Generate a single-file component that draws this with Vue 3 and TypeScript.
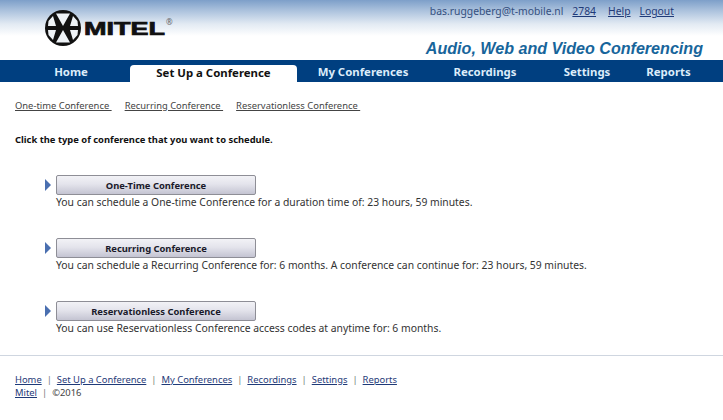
<script setup lang="ts">
const navItems = [
  { label: 'Home', width: 118 },
  { label: 'Set Up a Conference', width: 167, active: true },
  { label: 'My Conferences', width: 132 },
  { label: 'Recordings', width: 112 },
  { label: 'Settings', width: 92 },
  { label: 'Reports', width: 71 }
]
const subLinks = ['One-time Conference', 'Recurring Conference', 'Reservationless Conference']
const options = [
  {
    title: 'One-Time Conference',
    text: 'You can schedule a One-time Conference for a duration time of: 23 hours, 59 minutes.'
  },
  {
    title: 'Recurring Conference',
    text: 'You can schedule a Recurring Conference for: 6 months. A conference can continue for: 23 hours, 59 minutes.'
  },
  {
    title: 'Reservationless Conference',
    text: 'You can use Reservationless Conference access codes at anytime for: 6 months.'
  }
]
const footerLinks = ['Home', 'Set Up a Conference', 'My Conferences', 'Recordings', 'Settings', 'Reports']
</script>

<template>
  <div class="page">
    <header class="header">
      <div class="logo">
        <svg class="mark" viewBox="0 0 36 36" width="36" height="36">
          <circle cx="18" cy="18" r="18" fill="#111" />
          <path d="M11 3.5 L25 3.5 L18 16 Z M11 32.5 L25 32.5 L18 20 Z" fill="#eef2f6" />
          <path d="M3.5 11 L8 6 L11 16 L3 16 Z M3.5 25 L8 30 L11 20 L3 20 Z" fill="#eef2f6" />
          <path d="M32.5 11 L28 6 L25 16 L33 16 Z M32.5 25 L28 30 L25 20 L33 20 Z" fill="#eef2f6" />
        </svg>
        <span class="logo-text">MITEL</span>
        <span class="reg">®</span>
      </div>
      <div class="header-right">
        <div class="user">
          <span class="email">bas.ruggeberg@t-mobile.nl</span>
          <a class="ext">2784</a>
          <a>Help</a>
          <a>Logout</a>
        </div>
        <div class="product">Audio, Web and Video Conferencing</div>
      </div>
    </header>

    <nav class="nav">
      <div
        v-for="item in navItems"
        :key="item.label"
        class="nav-item"
        :class="{ active: item.active }"
        :style="{ width: item.width + 'px' }"
      >
        {{ item.label }}
      </div>
    </nav>

    <main class="main">
      <div class="sublinks">
        <a v-for="link in subLinks" :key="link">{{ link }}&nbsp;</a>
      </div>
      <p class="intro">Click the type of conference that you want to schedule.</p>
      <div class="options">
        <div v-for="option in options" :key="option.title" class="option">
          <div class="option-top">
            <span class="arrow"></span>
            <button class="option-btn" type="button">{{ option.title }}</button>
          </div>
          <p class="option-text">{{ option.text }}</p>
        </div>
      </div>
    </main>

    <footer class="footer">
      <div class="footer-row">
        <template v-for="(link, i) in footerLinks" :key="link">
          <span v-if="i > 0" class="sep">|</span>
          <a>{{ link }}</a>
        </template>
      </div>
      <div class="footer-row">
        <a>Mitel</a>
        <span class="sep">|</span>
        <span class="copy">©2016</span>
      </div>
    </footer>
  </div>
</template>

<style>
html,
body {
  margin: 0;
  background: #fff;
}
</style>

<style scoped>
.page {
  width: 723px;
  height: 420px;
  overflow: hidden;
  font-family: 'Noto Sans', sans-serif;
  font-size: 10.35px;
  color: #222;
}

.header {
  height: 60px;
  display: flex;
  justify-content: space-between;
  background: linear-gradient(#7d9fc9 0, #a9c0dc 10px, #e2eaf3 24px, #fff 36px);
}

.logo {
  display: flex;
  align-items: flex-start;
  padding: 10px 0 0 45px;
}

.mark {
  flex: none;
}

.logo-text {
  display: inline-block;
  width: 82px;
  margin: 10px 0 0 3px;
  font-family: 'Liberation Sans', sans-serif;
  font-size: 18px;
  font-weight: 700;
  line-height: 18px;
  color: #111;
  -webkit-text-stroke: 0.7px #111;
  transform: scaleX(1.5);
  transform-origin: left center;
}

.reg {
  margin: 8px 0 0 0;
  font-size: 8px;
  line-height: 8px;
  color: #666;
}

.header-right {
  display: flex;
  flex-direction: column;
  align-items: flex-end;
  padding-right: 20px;
}

.user {
  display: flex;
  gap: 9px;
  padding: 4px 29px 0 0;
  line-height: 15px;
  color: #35507f;
}

.user a {
  color: #1f3a78;
  text-decoration: underline;
}

.ext {
  margin-right: 3px;
}

.product {
  margin-top: 19px;
  font-family: 'Liberation Sans', sans-serif;
  font-size: 16.1px;
  font-style: italic;
  font-weight: 700;
  line-height: 20px;
  color: #17659b;
}

.nav {
  height: 22px;
  display: flex;
  padding-left: 12px;
  background: #003f80;
}

.nav-item {
  padding-top: 4px;
  box-sizing: border-box;
  text-align: center;
  font-size: 11.4px;
  font-weight: 700;
  line-height: 16px;
  color: #dcecfa;
}

.nav-item.active {
  margin-top: 5px;
  padding-top: 0;
  height: 17px;
  border-radius: 4px 4px 0 0;
  background: #fff;
  color: #111;
}

.main {
  padding: 0 15px;
}

.sublinks {
  display: flex;
  gap: 13px;
  padding-top: 16px;
  font-size: 9.4px;
  line-height: 15px;
}

.sublinks a {
  color: #444;
  text-decoration: underline;
}

.intro {
  margin: 19px 0 0;
  font-size: 9.4px;
  font-weight: 700;
  line-height: 15px;
  color: #111;
}

.options {
  display: flex;
  flex-direction: column;
  gap: 28px;
  padding: 28px 0 0 30px;
}

.option-top {
  display: flex;
  align-items: center;
  gap: 5px;
}

.arrow {
  width: 0;
  height: 0;
  border-style: solid;
  border-width: 6px 0 6px 6px;
  border-color: transparent transparent transparent #4a6fb0;
}

.option-btn {
  width: 200px;
  height: 20px;
  padding: 0;
  border: 1px solid #8e8e96;
  border-radius: 2px;
  background: linear-gradient(#f2f2f6, #e4e4ec 45%, #c4c4d2);
  font-family: inherit;
  font-size: 9.4px;
  font-weight: 700;
  color: #1a1a2a;
}

.option-text {
  margin: 0 0 0 11px;
  line-height: 15px;
  color: #333;
}

.footer {
  margin-top: 19px;
  padding: 17px 15px 0;
  border-top: 1px solid #cfd6e0;
  font-size: 9.4px;
  line-height: 13px;
}

.footer-row {
  display: flex;
  gap: 5px;
}

.footer-row a {
  color: #1f3a78;
  text-decoration: underline;
}

.sep {
  color: #777;
}

.copy {
  color: #444;
}
</style>
